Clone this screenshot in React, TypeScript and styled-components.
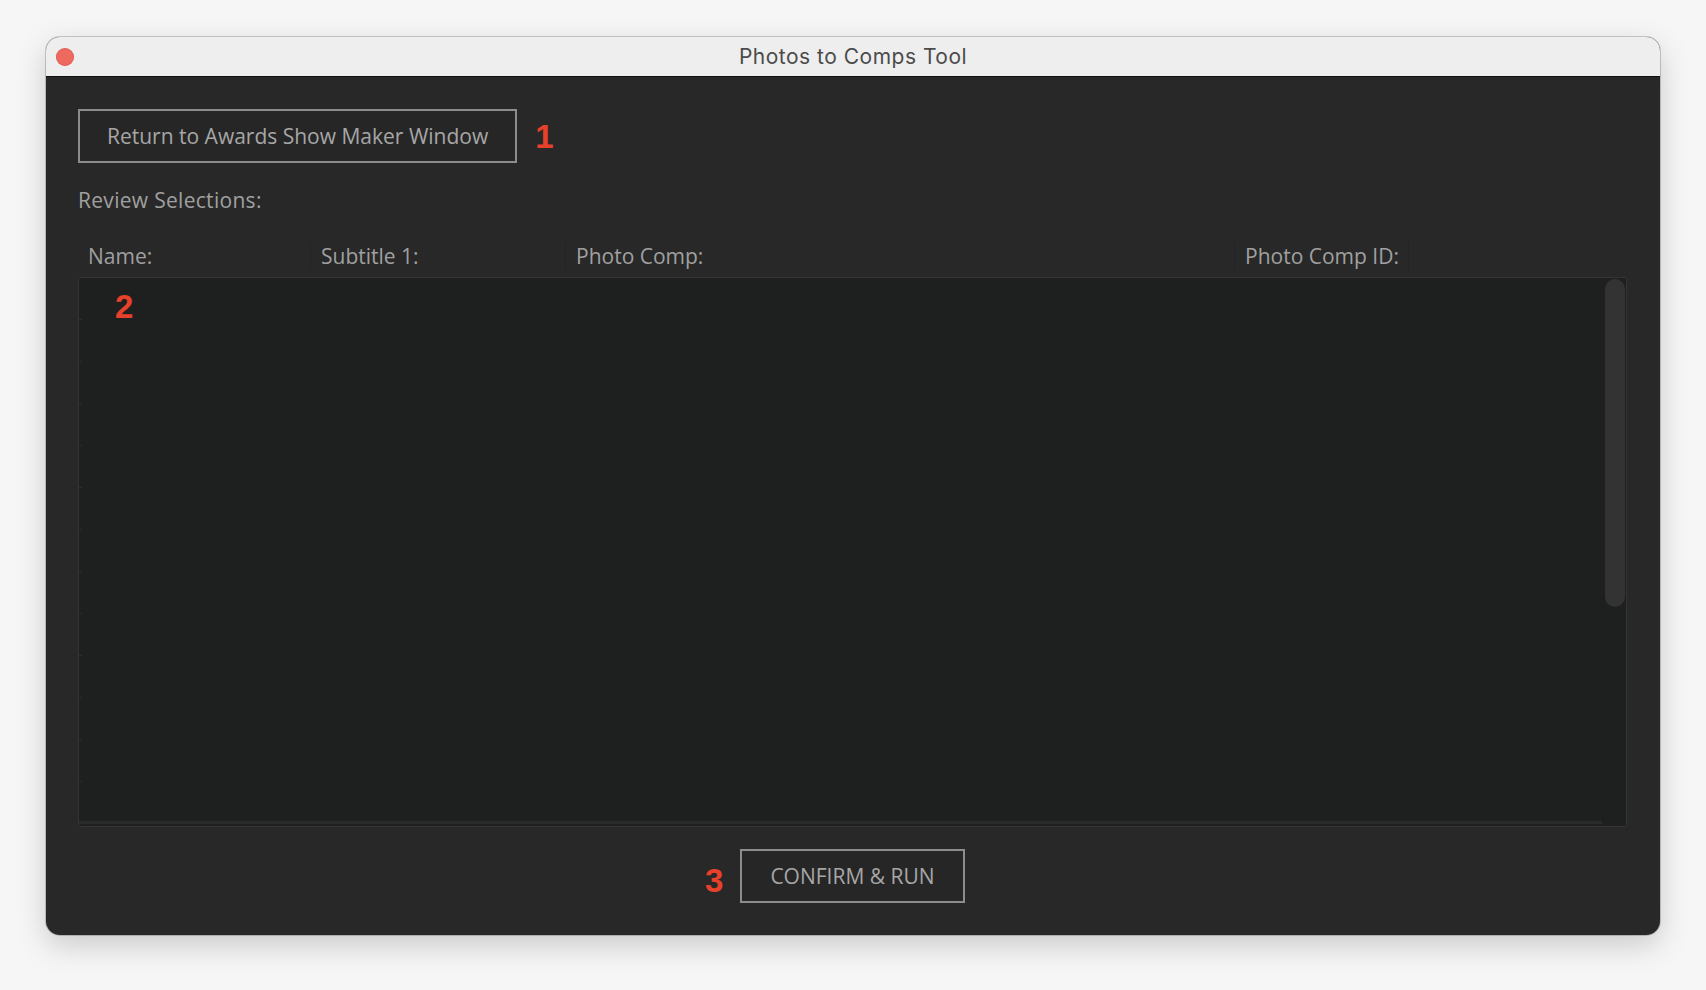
import React from 'react';
import styled, { createGlobalStyle } from 'styled-components';

const GlobalStyle = createGlobalStyle`
  html, body {
    margin: 0;
    padding: 0;
    background: #f6f6f6;
  }
  body {
    font-family: 'Open Sans', 'Noto Sans', sans-serif;
  }
`;

const Page = styled.div`
  width: 1706px;
  height: 990px;
  padding: 37px 0 0 46px;
  box-sizing: border-box;
`;

const Window = styled.div`
  width: 1614px;
  height: 898px;
  border-radius: 14px;
  overflow: hidden;
  background: #282828;
  display: flex;
  flex-direction: column;
  box-shadow: 0 0 0 1px rgba(0, 0, 0, 0.18), 0 10px 30px rgba(0, 0, 0, 0.18);
`;

const TitleBar = styled.div`
  position: relative;
  height: 39px;
  flex: none;
  background: #eeeeee;
  border-bottom: 1px solid #111111;
  display: flex;
  align-items: center;
  justify-content: center;
`;

const CloseDot = styled.span`
  position: absolute;
  left: 10px;
  top: 11px;
  width: 18px;
  height: 18px;
  border-radius: 50%;
  background: #ee6a5f;
  box-shadow: inset 0 0 0 1px rgba(200, 70, 60, 0.35);
`;

const Title = styled.div`
  font-family: Inter, 'Noto Sans', sans-serif;
  font-size: 21px;
  color: #4b4b4b;
  letter-spacing: 0.5px;
`;

const Content = styled.div`
  flex: 1;
  display: flex;
  flex-direction: column;
  padding: 32px 33px 33px 32px;
`;

const TopRow = styled.div`
  display: flex;
  align-items: center;
  gap: 18px;
`;

const OutlineButton = styled.button<{ pad: number }>`
  height: 54px;
  padding: 0 ${(p) => p.pad}px;
  background: #262626;
  border: 2px solid #8c8c8c;
  color: #a6a6a6;
  font-family: 'Open Sans', 'Noto Sans', sans-serif;
  font-size: 21px;
  cursor: pointer;
  box-sizing: border-box;
`;

const Marker = styled.span`
  font-family: 'Liberation Sans', Arial, sans-serif;
  font-weight: bold;
  font-size: 33px;
  line-height: 1;
  color: #e8412b;
`;

const SectionLabel = styled.div`
  margin-top: 22px;
  font-size: 21px;
  line-height: 30px;
  letter-spacing: 0.3px;
  color: #a0a0a0;
`;

const HeaderRow = styled.div`
  margin-top: 27px;
  display: flex;
  height: 28px;
`;

const HeaderCell = styled.div<{ w: number; first?: boolean; last?: boolean }>`
  width: ${(p) => p.w}px;
  box-sizing: border-box;
  padding-left: 10px;
  font-size: 21px;
  line-height: 28px;
  color: #a0a0a0;
  white-space: nowrap;
  border-left: ${(p) => (p.first ? 'none' : '1px solid #232323')};
  border-right: ${(p) => (p.last ? '1px solid #232323' : 'none')};
`;

const Panel = styled.div`
  position: relative;
  margin-top: 7px;
  height: 550px;
  box-sizing: border-box;
  background: #1e1f1f;
  border: 1px solid #333434;
  border-radius: 3px;
  display: flex;
  overflow: hidden;
`;

const RowList = styled.div`
  flex: 1;
  display: flex;
  flex-direction: column;
  position: relative;
`;

const EmptyRow = styled.div`
  height: 42px;
  flex: none;
  position: relative;
  &::after {
    content: '';
    position: absolute;
    left: 0;
    bottom: 0;
    width: 3px;
    height: 1px;
    background: #2c2d2d;
  }
`;

const HScrollTrack = styled.div`
  position: absolute;
  left: 0;
  right: 0;
  bottom: 2px;
  height: 3px;
  background: #2a2a2a;
`;

const VScroll = styled.div`
  width: 24px;
  flex: none;
  padding: 1px 2px 0 2px;
  box-sizing: border-box;
  border-left: 1px solid #1e1f1f;
`;

const Thumb = styled.div`
  width: 20px;
  height: 328px;
  border-radius: 10px;
  background: #333333;
`;

const PanelMarker = styled(Marker)`
  position: absolute;
  left: 36px;
  top: 12px;
`;

const Footer = styled.div`
  margin-top: 22px;
  display: flex;
  justify-content: center;
`;

const FooterAnchor = styled.div`
  position: relative;
  display: flex;
`;

const FooterMarker = styled(Marker)`
  position: absolute;
  right: calc(100% + 17px);
  top: 15px;
`;

const columns = [
  { label: 'Name:', w: 232 },
  { label: 'Subtitle 1:', w: 255 },
  { label: 'Photo Comp:', w: 669 },
  { label: 'Photo Comp ID:', w: 175 },
];

const App = () => {
  return (
    <Page>
      <GlobalStyle />
      <Window>
        <TitleBar>
          <CloseDot />
          <Title>Photos to Comps Tool</Title>
        </TitleBar>
        <Content>
          <TopRow>
            <OutlineButton pad={27}>Return to Awards Show Maker Window</OutlineButton>
            <Marker>1</Marker>
          </TopRow>
          <SectionLabel>Review Selections:</SectionLabel>
          <HeaderRow>
            {columns.map((c, i) => (
              <HeaderCell
                key={c.label}
                w={c.w}
                first={i === 0}
                last={i === columns.length - 1}
              >
                {c.label}
              </HeaderCell>
            ))}
          </HeaderRow>
          <Panel>
            <RowList>
              {Array.from({ length: 12 }).map((_, i) => (
                <EmptyRow key={i} />
              ))}
              <HScrollTrack />
            </RowList>
            <VScroll>
              <Thumb />
            </VScroll>
            <PanelMarker>2</PanelMarker>
          </Panel>
          <Footer>
            <FooterAnchor>
              <FooterMarker>3</FooterMarker>
              <OutlineButton pad={28}>CONFIRM &amp; RUN</OutlineButton>
            </FooterAnchor>
          </Footer>
        </Content>
      </Window>
    </Page>
  );
};

export default App;
